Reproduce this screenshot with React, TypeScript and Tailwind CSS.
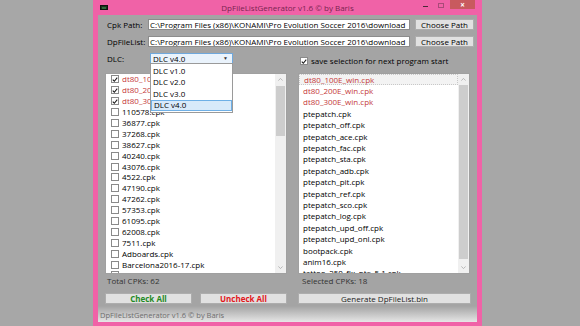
import React from 'react';

const PATH = 'C:\\Program Files (x86)\\KONAMI\\Pro Evolution Soccer 2016\\download';

const leftItems = [
  { name: 'dt80_100E_win.cpk', checked: true, red: true },
  { name: 'dt80_200E_win.cpk', checked: true, red: true },
  { name: 'dt80_300E_win.cpk', checked: true, red: true },
  { name: '110578.cpk' },
  { name: '36877.cpk' },
  { name: '37268.cpk' },
  { name: '38627.cpk' },
  { name: '40240.cpk' },
  { name: '43076.cpk' },
  { name: '4522.cpk' },
  { name: '47190.cpk' },
  { name: '47262.cpk' },
  { name: '57353.cpk' },
  { name: '61095.cpk' },
  { name: '62008.cpk' },
  { name: '7511.cpk' },
  { name: 'Adboards.cpk' },
  { name: 'Barcelona2016-17.cpk' },
  { name: 'Bundesliga_Logos.cpk' },
];

const rightItems = [
  { name: 'dt80_100E_win.cpk', red: true },
  { name: 'dt80_200E_win.cpk', red: true },
  { name: 'dt80_300E_win.cpk', red: true },
  { name: 'ptepatch.cpk' },
  { name: 'ptepatch_off.cpk' },
  { name: 'ptepatch_ace.cpk' },
  { name: 'ptepatch_fac.cpk' },
  { name: 'ptepatch_sta.cpk' },
  { name: 'ptepatch_adb.cpk' },
  { name: 'ptepatch_pit.cpk' },
  { name: 'ptepatch_ref.cpk' },
  { name: 'ptepatch_sco.cpk' },
  { name: 'ptepatch_log.cpk' },
  { name: 'ptepatch_upd_off.cpk' },
  { name: 'ptepatch_upd_onl.cpk' },
  { name: 'bootpack.cpk' },
  { name: 'anim16.cpk' },
  { name: 'tattoo_250_fix_pte_5.1.cpk' },
];

const CheckBox: React.FC<{ checked?: boolean }> = ({ checked }) => (
  <span className="w-[8px] h-[8px] border border-[#8a8a8a] bg-white flex items-center justify-center shrink-0">
    {checked && (
      <svg viewBox="0 0 8 8" className="w-[7px] h-[7px]">
        <path d="M1 4.2 L3.1 6.3 L7 1.5" fill="none" stroke="#1a1a1a" strokeWidth="1.4" />
      </svg>
    )}
  </span>
);

const Arrow: React.FC<{ down?: boolean }> = ({ down }) => (
  <svg viewBox="0 0 7 4" className="w-[5px] h-[3px]">
    <path d={down ? 'M0.5 0.5 L3.5 3.5 L6.5 0.5' : 'M0.5 3.5 L3.5 0.5 L6.5 3.5'} fill="none" stroke="#a0a0a0" strokeWidth="1" />
  </svg>
);

const ScrollBar: React.FC<{ thumb: string }> = ({ thumb }) => (
  <div className="w-[11px] bg-[#f0f0f0] flex flex-col shrink-0">
    <div className="h-[11px] flex items-center justify-center">
      <Arrow />
    </div>
    <div className="flex-1 px-[1px]">
      <div className={`bg-[#cdcdcd] ${thumb}`} />
    </div>
    <div className="h-[11px] flex items-center justify-center">
      <Arrow down />
    </div>
  </div>
);

const WinButton: React.FC<{ className?: string; children: React.ReactNode }> = ({ className, children }) => (
  <button className={`h-[11px] bg-[#e1e1e1] border border-[#adadad] flex items-center justify-center leading-none ${className ?? ''}`}>
    {children}
  </button>
);

export default function App() {
  return (
    <div className="w-[580px] h-[326px] bg-[#a7a7a7] flex pl-[93px] overflow-hidden font-['Open_Sans','Noto_Sans',sans-serif] text-[8px] text-black">
      <div className="w-[389px] h-[326px] bg-[#f062a7] flex flex-col px-[5px] pb-[4px]">
        {/* title bar */}
        <div className="h-[15px] -mx-[5px] grid grid-cols-[1fr_auto_1fr] items-center shrink-0">
          <div className="pl-[7px] flex items-center">
            <span className="w-[8px] h-[5px] bg-[#1b2e1e] border border-[#0d130e] flex items-center justify-center">
              <span className="w-[4px] h-[2px] bg-[#2f6a3a]" />
            </span>
          </div>
          <span className="text-[#7a2450] leading-none">DpFileListGenerator v1.6 © by Baris</span>
          <div className="flex items-start justify-end pr-[7px] self-start h-full">
            <span className="w-[5px] h-[1px] bg-[#4a2a38] mt-[6px]" />
            <span className="w-[6px] h-[5px] border border-[#a94a78] ml-[10px] mt-[3px]" />
            <span className="w-[25px] h-[9px] bg-[#c85a5e] ml-[6px] flex items-center justify-center text-white text-[8px] leading-none font-bold">
              ×
            </span>
          </div>
        </div>

        {/* client area */}
        <div className="flex-1 bg-[#a4a4a4] flex flex-col relative">
          <div className="flex items-center h-[11px] mt-[4px]">
            <span className="w-[50px] pl-[9px] leading-none">Cpk Path:</span>
            <div className="w-[262px] h-[11px] bg-white border border-[#8c8c8c] flex items-center pl-[1px] overflow-hidden whitespace-nowrap leading-none">
              {PATH}
            </div>
            <WinButton className="w-[59px] ml-[5px]">Choose Path</WinButton>
          </div>
          <div className="flex items-center h-[11px] mt-[6px]">
            <span className="w-[50px] pl-[9px] leading-none">DpFileList:</span>
            <div className="w-[262px] h-[11px] bg-white border border-[#8c8c8c] flex items-center pl-[1px] overflow-hidden whitespace-nowrap leading-none">
              {PATH}
            </div>
            <WinButton className="w-[59px] ml-[5px]">Choose Path</WinButton>
          </div>

          <div className="flex items-center h-[11px] mt-[6px]">
            <span className="w-[52px] pl-[9px] leading-none">DLC:</span>
            <div className="w-[83px] h-[11px] bg-[#eaf3fc] border border-[#6fa8dc] flex items-center justify-between pl-[2px] pr-[4px] leading-none">
              <span>DLC v4.0</span>
              <span className="text-[5px] text-[#333]">▼</span>
            </div>
            <div className="ml-[67px] mt-[5px] flex items-center gap-[3px]">
              <CheckBox checked />
              <span className="leading-none">save selection for next program start</span>
            </div>
          </div>

          {/* lists */}
          <div className="flex mt-[9px] h-[201px]">
            <div className="ml-[7px] w-[182px] bg-white border border-[#a0a0a0] flex">
              <div className="flex-1 overflow-hidden">
                {leftItems.map((it) => (
                  <div key={it.name} className="h-[10.9px] flex items-center pl-[5px] gap-[3px] whitespace-nowrap">
                    <CheckBox checked={it.checked} />
                    <span className={`leading-none ${it.red ? 'text-[#c53a3a]' : ''}`}>{it.name}</span>
                  </div>
                ))}
              </div>
              <ScrollBar thumb="mt-[1px] h-[50px]" />
            </div>
            <div className="ml-[11px] w-[172px] bg-white border border-[#a0a0a0] flex">
              <div className="flex-1 overflow-hidden">
                {rightItems.map((it, i) => (
                  <div
                    key={it.name}
                    className={`h-[11.4px] flex items-center pl-[4px] whitespace-nowrap ${i === 0 ? 'bg-[#f3f3f3] border border-dotted border-[#c8c8c8] pl-[3px]' : ''}`}
                  >
                    <span className={`leading-none ${it.red ? 'text-[#c53a3a]' : ''}`}>{it.name}</span>
                  </div>
                ))}
              </div>
              <ScrollBar thumb="h-[174px]" />
            </div>
          </div>

          <div className="flex h-[10px] mt-[2px] items-center text-[#333]">
            <span className="ml-[9px] w-[193px] leading-none">Total CPKs: 62</span>
            <span className="ml-[2px] leading-none">Selected CPKs: 18</span>
          </div>

          <div className="flex mt-[7px]">
            <WinButton className="ml-[7px] w-[87px] font-bold text-[#1f8a24]">Check All</WinButton>
            <WinButton className="ml-[8px] w-[87px] font-bold text-[#e3161b]">Uncheck All</WinButton>
            <WinButton className="ml-[11px] w-[173px] text-[#222]">Generate DpFileList.bin</WinButton>
          </div>

          <div className="flex-1 mt-[2px] bg-linear-to-b from-[#a4a4a4] to-[#e6e6e6] flex items-end pb-[3px] pl-[2px]">
            <span className="text-[#6e6e6e] leading-none text-[7.5px]">DpFileListGenerator v1.6 © by Baris</span>
          </div>

          {/* open dropdown */}
          <div className="absolute left-[52px] top-[48px] w-[83px] bg-white border border-[#9a9a9a] flex flex-col py-[1px]">
            {['DLC v1.0', 'DLC v2.0', 'DLC v3.0', 'DLC v4.0'].map((d, i) => (
              <div
                key={d}
                className={`h-[11.5px] flex items-center pl-[2px] leading-none ${i === 3 ? 'bg-[#d8eafa] border border-[#6fb0e6] pl-[1px]' : ''}`}
              >
                {d}
              </div>
            ))}
          </div>
        </div>
      </div>
    </div>
  );
}
